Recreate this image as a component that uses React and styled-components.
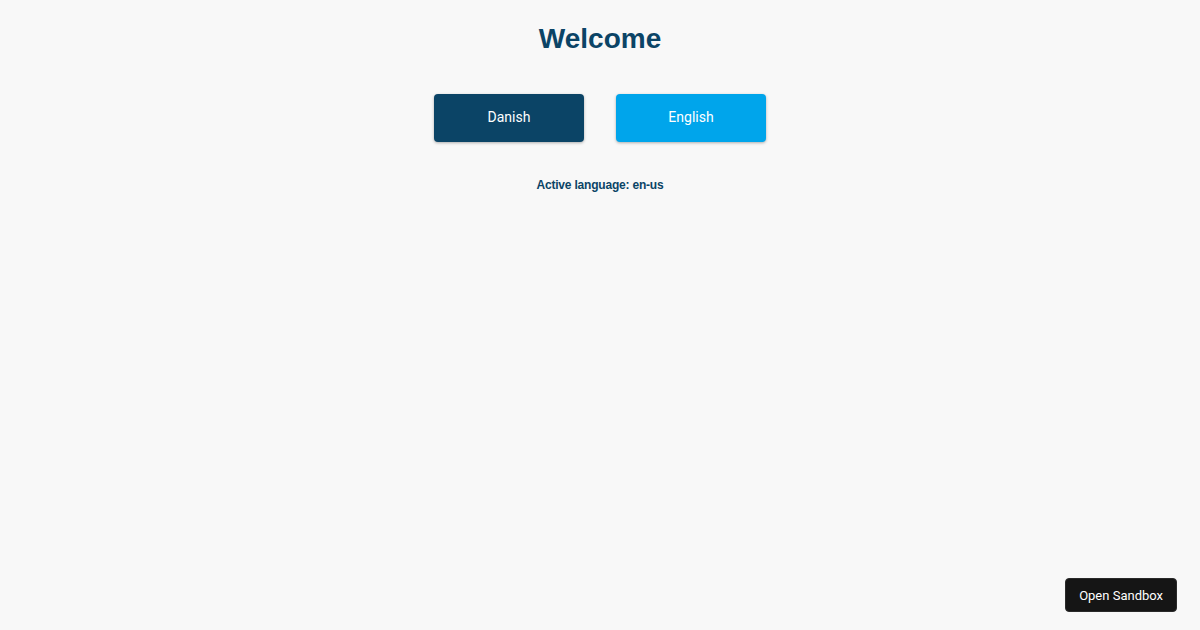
import React, { useState } from 'react';
import styled, { createGlobalStyle } from 'styled-components';

const GlobalStyle = createGlobalStyle`
	html, body {
		margin: 0;
		padding: 0;
		background-color: #f8f8f8;
		font-family: 'Liberation Sans', Arial, sans-serif;
	}
`;

const Page = styled.div`
	min-height: 630px;
	display: flex;
	flex-direction: column;
	align-items: center;
	padding-top: 23px;
	box-sizing: border-box;
`;

const Title = styled.h1`
	margin: 0;
	font-size: 28px;
	line-height: 32px;
	font-weight: bold;
	color: #0b4466;
`;

const ButtonRow = styled.div`
	display: flex;
	gap: 32px;
	margin-top: 39px;
`;

const LangButton = styled.button`
	width: 150px;
	height: 48px;
	padding: 0 0 2px;
	border: 0;
	border-radius: 4px;
	background-color: ${(props) => (props.$variant === 'dark' ? '#0b4466' : '#00a5eb')};
	color: #fff;
	font-family: Roboto, 'Liberation Sans', sans-serif;
	font-size: 14px;
	cursor: pointer;
	box-shadow: 0 1px 3px rgba(0, 0, 0, 0.3);
`;

const ActiveText = styled.p`
	margin: 36px 0 0;
	font-size: 12px;
	line-height: 14px;
	font-weight: bold;
	letter-spacing: -0.2px;
	color: #0b4466;
`;

const SandboxButton = styled.button`
	position: fixed;
	right: 23px;
	bottom: 18px;
	height: 34px;
	padding: 0 13px;
	border: 1px solid #2a2a2a;
	border-radius: 4px;
	background-color: #151515;
	color: #fff;
	font-family: Roboto, 'Liberation Sans', sans-serif;
	font-size: 13px;
`;

const App = () => {
	const [lang, setLang] = useState('en-us');

	return (
		<Page>
			<GlobalStyle />
			<Title>Welcome</Title>
			<ButtonRow>
				<LangButton $variant="dark" onClick={() => setLang('da-dk')}>
					Danish
				</LangButton>
				<LangButton $variant="light" onClick={() => setLang('en-us')}>
					English
				</LangButton>
			</ButtonRow>
			<ActiveText>Active language: {lang}</ActiveText>
			<SandboxButton>Open Sandbox</SandboxButton>
		</Page>
	);
};

export default App;
